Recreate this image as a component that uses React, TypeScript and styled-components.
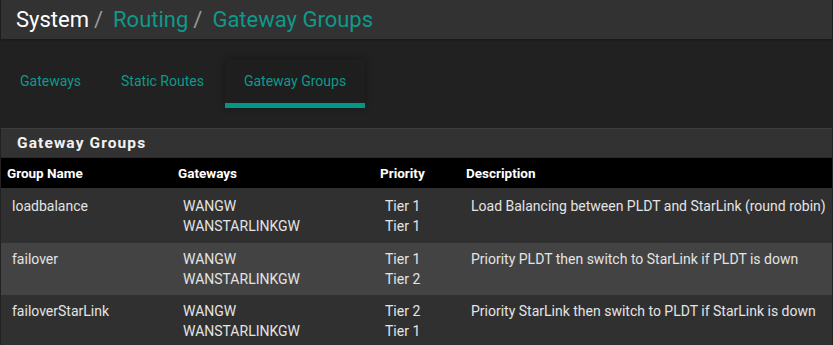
import styled, { createGlobalStyle } from "styled-components";

const GlobalStyle = createGlobalStyle`
  html, body {
    margin: 0;
    padding: 0;
    background: #212121;
    font-family: Roboto, "Liberation Sans", sans-serif;
    overflow: hidden;
  }
`;

const Page = styled.div`
  padding: 0 1px;
  width: 833px;
  height: 345px;
  box-sizing: border-box;
  background: #212121;
`;

const Header = styled.div`
  height: 39px;
  background: #323232;
  display: flex;
  align-items: center;
  padding-left: 15px;
  font-size: 22px;
  box-shadow: 0 1px 2px rgba(0, 0, 0, 0.3);
`;

const Crumb = styled.span<{ $link?: boolean }>`
  color: ${(p) => (p.$link ? "#0e998a" : "#ffffff")};
`;

const Sep = styled.span`
  color: #9a9a9a;
  margin: 0 10px 0 5px;
`;

const Tabs = styled.div`
  display: flex;
  gap: 2px;
  margin-top: 20px;
  height: 49px;
`;

const Tab = styled.div<{ $active?: boolean }>`
  display: flex;
  align-items: center;
  padding: 0 19px;
  font-size: 14px;
  color: #0e998a;
  box-sizing: border-box;
  background: ${(p) => (p.$active ? "#1e1e1e" : "transparent")};
  border-bottom: 5px solid ${(p) => (p.$active ? "#009688" : "transparent")};
  box-shadow: ${(p) => (p.$active ? "0 0 6px rgba(0,0,0,0.35)" : "none")};
`;

const Panel = styled.div`
  margin-top: 20px;
  border-top: 1px solid #3e3e3e;
`;

const PanelHeading = styled.div`
  height: 28px;
  background: #323232;
  display: flex;
  align-items: center;
  padding-left: 16px;
  color: #f2f2f2;
  font-size: 15.5px;
  font-weight: 700;
  letter-spacing: 1.1px;
  border-bottom: 1px solid #2a2a2a;
`;

const Grid = "170px 202px 86px 1fr";

const HeadRow = styled.div`
  display: grid;
  grid-template-columns: ${Grid};
  height: 30px;
  align-items: center;
  background: #000;
`;

const HeadCell = styled.div<{ $first?: boolean }>`
  padding-left: ${(p) => (p.$first ? "6px" : "7px")};
  color: #ffffff;
  font-size: 13.5px;
  font-weight: 700;
`;

const Row = styled.div<{ $alt?: boolean; $first?: boolean }>`
  display: grid;
  grid-template-columns: ${Grid};
  padding: ${(p) => (p.$first ? "8px 0 7px" : "6px 0 6px")};
  background: ${(p) => (p.$alt ? "#434343" : "#303030")};
`;

const Cell = styled.div<{ $first?: boolean }>`
  padding-left: ${(p) => (p.$first ? "11px" : "12px")};
  color: #e4e4e4;
  font-size: 14px;
  line-height: 20px;
`;

const groups = [
  {
    name: "loadbalance",
    gws: ["WANGW", "WANSTARLINKGW"],
    tiers: ["Tier 1", "Tier 1"],
    desc: "Load Balancing between PLDT and StarLink (round robin)",
  },
  {
    name: "failover",
    gws: ["WANGW", "WANSTARLINKGW"],
    tiers: ["Tier 1", "Tier 2"],
    desc: "Priority PLDT then switch to StarLink if PLDT is down",
  },
  {
    name: "failoverStarLink",
    gws: ["WANGW", "WANSTARLINKGW"],
    tiers: ["Tier 2", "Tier 1"],
    desc: "Priority StarLink then switch to PLDT if StarLink is down",
  },
];

export default function App() {
  return (
    <Page>
      <GlobalStyle />
      <Header>
        <Crumb>System</Crumb>
        <Sep>/</Sep>
        <Crumb $link>Routing</Crumb>
        <Sep>/</Sep>
        <Crumb $link>Gateway Groups</Crumb>
      </Header>
      <Tabs>
        <Tab>Gateways</Tab>
        <Tab>Static Routes</Tab>
        <Tab $active>Gateway Groups</Tab>
      </Tabs>
      <Panel>
        <PanelHeading>Gateway Groups</PanelHeading>
        <HeadRow>
          <HeadCell $first>Group Name</HeadCell>
          <HeadCell>Gateways</HeadCell>
          <HeadCell>Priority</HeadCell>
          <HeadCell>Description</HeadCell>
        </HeadRow>
        {groups.map((g, i) => (
          <Row key={g.name} $alt={i % 2 === 1} $first={i === 0}>
            <Cell $first>{g.name}</Cell>
            <Cell>
              {g.gws.map((w) => (
                <div key={w}>{w}</div>
              ))}
            </Cell>
            <Cell>
              {g.tiers.map((t, j) => (
                <div key={j}>{t}</div>
              ))}
            </Cell>
            <Cell>{g.desc}</Cell>
          </Row>
        ))}
      </Panel>
    </Page>
  );
}
